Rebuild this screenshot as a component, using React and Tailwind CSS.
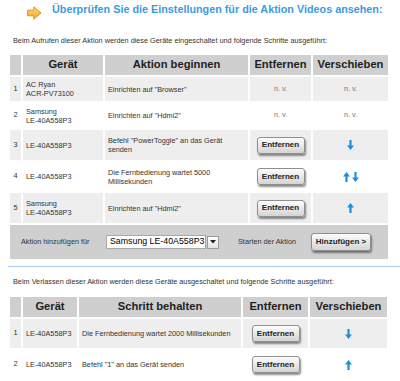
import React from 'react';

const font = { fontFamily: '"Liberation Sans", Arial, sans-serif' };

const OrangeArrow = () => (
  <svg width="15" height="14" viewBox="0 0 15 14" className="shrink-0 mt-[6px] ml-[27px]">
    <defs>
      <linearGradient id="og" x1="0" y1="0" x2="0" y2="1">
        <stop offset="0" stopColor="#ffe07a" />
        <stop offset="1" stopColor="#f4a020" />
      </linearGradient>
    </defs>
    <path d="M0.5 4.2 H6.8 V0.8 L14 7 L6.8 13.2 V9.8 H0.5 Z" fill="url(#og)" stroke="#e39424" strokeWidth="1" strokeLinejoin="round" />
  </svg>
);

const BlueArrow = ({ up }) => (
  <svg width="7" height="10" viewBox="0 0 7 10">
    <path
      d={up
        ? 'M3.5 0 L7 4.6 L4.6 4.6 L4.6 10 L2.4 10 L2.4 4.6 L0 4.6 Z'
        : 'M3.5 10 L7 5.4 L4.6 5.4 L4.6 0 L2.4 0 L2.4 5.4 L0 5.4 Z'}
      fill="#1b8fe2"
    />
  </svg>
);

const Move = ({ dirs }) => {
  if (!dirs) return <span className="text-[#777]">n. v.</span>;
  return (
    <div className="flex justify-center items-center gap-[2px]">
      {dirs.includes('up') && <BlueArrow up />}
      {dirs.includes('down') && <BlueArrow />}
    </div>
  );
};

const RemoveButton = () => (
  <button className="w-[48px] h-[17px] rounded-[3px] border border-[#8f8f8f] bg-linear-to-b from-[#fdfdfd] to-[#d4d4d4] shadow-[1px_2px_2px_rgba(0,0,0,0.45)] text-[8px] font-bold text-[#222] leading-none">
    Entfernen
  </button>
);

const startRows = [
  { n: 1, dev: ['AC Ryan', 'ACR-PV73100'], step: <>Einrichten auf "Browser"</>, h: 'h-[24px]', gray: true },
  { n: 2, dev: ['Samsung', 'LE-40A558P3'], step: <>Einrichten auf "Hdmi2"</>, h: 'h-[25px]' },
  { n: 3, dev: ['LE-40A558P3'], step: <>Befehl "PowerToggle" an das Gerät<br />senden</>, h: 'h-[30px]', gray: true, btn: true, move: ['down'] },
  { n: 4, dev: ['LE-40A558P3'], step: <>Die Fernbedienung wartet 5000<br />Millisekunden</>, h: 'h-[29px]', btn: true, move: ['up', 'down'] },
  { n: 5, dev: ['Samsung', 'LE-40A558P3'], step: <>Einrichten auf "Hdmi2"</>, h: 'h-[30px]', gray: true, btn: true, move: ['up'] },
];

const endRows = [
  { n: 1, dev: ['LE-40A558P3'], step: 'Die Fernbedienung wartet 2000 Millisekunden', h: 'h-[29px]', gray: true, move: ['down'] },
  { n: 2, dev: ['LE-40A558P3'], step: 'Befehl "1" an das Gerät senden', h: 'h-[29px]', move: ['up'] },
  { n: 3, dev: [''], step: '', h: 'h-[29px]', gray: true, empty: true },
];

const Head = ({ widths, titles }) => (
  <thead>
    <tr>
      {titles.map((t, i) => (
        <th
          key={i}
          className={`${widths[i]} h-[20px] p-0 bg-[#cfcfcf] text-center text-[11.2px] font-bold text-[#1e1e1e] leading-none`}
        >
          {t}
        </th>
      ))}
    </tr>
  </thead>
);

const StepTable = ({ rows, widths, titles, footer }) => (
  <table className="ml-[8px] table-fixed border-separate border-spacing-[2px] text-[7.3px] text-[#333]">
    <Head widths={widths} titles={titles} />
    <tbody>
      {rows.map((r) => {
        const bg = r.gray ? 'bg-[#eeeeee]' : 'bg-white';
        return (
          <tr key={r.n}>
            <td className={`${r.h} ${bg} p-0 text-center`}>{r.empty ? '' : r.n}</td>
            <td className={`${bg} p-0 pl-[3px] leading-[9px]`}>
              {r.dev.map((d, i) => (
                <div key={i}>{d}</div>
              ))}
            </td>
            <td className={`${bg} p-0 pl-[3px] leading-[9px] whitespace-nowrap`}>{r.step}</td>
            <td className={`${bg} p-0 text-center`}>
              {r.empty ? null : r.btn || r.move ? <RemoveButton /> : <span className="text-[#777]">n. v.</span>}
            </td>
            <td className={`${bg} p-0 text-center`}>{r.empty ? null : <Move dirs={r.move} />}</td>
          </tr>
        );
      })}
      {footer}
    </tbody>
  </table>
);

const AddFooter = (
  <tr>
    <td colSpan={5} className="h-[34px] p-0 bg-[#cfcfcf]">
      <div className="flex items-center">
        <span className="w-[96px] pl-[11px]">Aktion hinzufügen für</span>
        <div className="w-[100px] h-[14px] bg-white border border-[#a8a8a8] flex items-center pl-[3px] text-[8.8px] text-black">
          Samsung LE-40A558P3
        </div>
        <div className="ml-[1px] w-[12px] h-[13px] border border-[#9a9a9a] bg-linear-to-b from-white to-[#e4e4e4] flex items-center justify-center">
          <svg width="6" height="4" viewBox="0 0 6 4">
            <path d="M0 0 H6 L3 3.5 Z" fill="#222" />
          </svg>
        </div>
        <span className="ml-[19px]">Starten der Aktion</span>
        <button className="ml-[15px] w-[60px] h-[18px] rounded-[3px] border border-[#8f8f8f] bg-linear-to-b from-[#fdfdfd] to-[#d4d4d4] shadow-[1px_2px_2px_rgba(0,0,0,0.45)] text-[8px] font-bold text-[#222] leading-none">
          Hinzufügen &gt;
        </button>
      </div>
    </td>
  </tr>
);

export default function App() {
  return (
    <div className="w-[400px] h-[381px] overflow-hidden bg-white" style={font}>
      <div className="flex items-start h-[20px]">
        <OrangeArrow />
        <h1 className="ml-[10px] mt-[3px] text-[10.8px] leading-[12px] font-bold text-[#3c9be0] whitespace-nowrap">
          Überprüfen Sie die Einstellungen für die Aktion Videos ansehen:
        </h1>
      </div>

      <p className="mt-[16px] pl-[13px] text-[7.3px] leading-[10px] text-[#333]">
        Beim Aufrufen dieser Aktion werden diese Geräte eingeschaltet und folgende Schritte ausgeführt:
      </p>

      <div className="mt-[7px]">
        <StepTable
          rows={startRows}
          widths={['w-[11px]', 'w-[80px]', 'w-[143px]', 'w-[61px]', 'w-[75px]']}
          titles={['', 'Gerät', 'Aktion beginnen', 'Entfernen', 'Verschieben']}
          footer={AddFooter}
        />
      </div>

      <div className="mt-[5px] ml-[8px] h-px bg-[#a9c7ec]" />

      <p className="mt-[10px] pl-[13px] text-[7.3px] leading-[10px] text-[#333]">
        Beim Verlassen dieser Aktion werden diese Geräte ausgeschaltet und folgende Schritte ausgeführt:
      </p>

      <div className="mt-[8px]">
        <StepTable
          rows={endRows}
          widths={['w-[11px]', 'w-[54px]', 'w-[162px]', 'w-[65px]', 'w-[77px]']}
          titles={['', 'Gerät', 'Schritt behalten', 'Entfernen', 'Verschieben']}
        />
      </div>
    </div>
  );
}
